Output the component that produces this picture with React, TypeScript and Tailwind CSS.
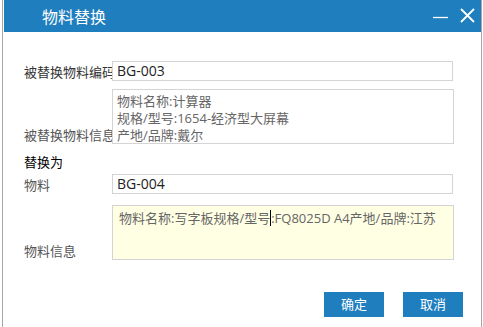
import * as React from "react";

const font = { fontFamily: '"Open Sans", "Noto Sans CJK SC", sans-serif' };

const Row = ({ label, labelClass, children }: { label: string; labelClass?: string; children: React.ReactNode }) => (
  <div className="flex items-end">
    <div className={`w-[88px] overflow-hidden whitespace-nowrap text-[13px] leading-[17px] ${labelClass ?? "text-[#333]"}`}>
      {label}
    </div>
    {children}
  </div>
);

const Input = ({ value }: { value: string }) => (
  <div className="flex h-[20px] w-[341px] items-center border border-[#d4d4d4] bg-white pl-[4px] text-[14px] leading-[18px] text-[#222]">
    {value}
  </div>
);

export default function App() {
  return (
    <div className="h-[327px] w-[483px] bg-white pl-[2px]" style={font}>
      <div className="h-full w-[480px] border-x border-[#a8a8a8] pl-px">
        {/* title bar */}
        <div className="flex h-[32px] items-center bg-[#1f7ebd] pl-[38px] pr-[6px]">
          <span className="pt-[2px] text-[16px] text-white">物料替换</span>
          <div className="ml-auto flex items-center gap-[12px]">
            <svg width="15" height="16" viewBox="0 0 15 16">
              <line x1="0" y1="9.5" x2="15" y2="9.5" stroke="white" strokeWidth="1.3" />
            </svg>
            <svg width="15" height="16" viewBox="0 0 15 16">
              <path d="M1 1 L14 14 M14 1 L1 14" stroke="white" strokeWidth="1.8" fill="none" />
            </svg>
          </div>
        </div>

        <div className="pl-[20px] pr-[18px]">
          <div className="mt-[29px]">
            <Row label="被替换物料编码">
              <Input value="BG-003" />
            </Row>
          </div>

          <div className="mt-[8px]">
            <Row label="被替换物料信息" labelClass="text-[#555]">
              <div className="h-[55px] w-[342px] border border-[#d4d4d4] bg-white px-[4px] pt-[3px] text-[13px] leading-[17px] text-[#666]">
                <div>物料名称:计算器</div>
                <div>规格/型号:1654-经济型大屏幕</div>
                <div>产地/品牌:戴尔</div>
              </div>
            </Row>
          </div>

          <div className="mt-[10px] text-[13px] leading-[17px] text-black">替换为</div>

          <div className="mt-[3px]">
            <Row label="物料" labelClass="text-[#555]">
              <Input value="BG-004" />
            </Row>
          </div>

          <div className="mt-[11px]">
            <Row label="物料信息" labelClass="text-[#555]">
              <div className="h-[55px] w-[342px] border border-[#d4d4d4] bg-[#ffffe4] px-[6px] pt-[4px] text-[13px] leading-[17px] whitespace-nowrap text-[#666]">
                物料名称:写字板规格/型号
                <span className="inline-block h-[16px] w-0 border-l border-black align-[-3px]" />
                :FQ8025D A4产地/品牌:江苏
              </div>
            </Row>
          </div>

          <div className="mt-[32px] flex justify-end gap-[19px]">
            <button className="h-[25px] w-[60px] bg-[#1f7ebd] text-[13px] text-white">确定</button>
            <button className="h-[25px] w-[60px] bg-[#1f7ebd] text-[13px] text-white">取消</button>
          </div>
        </div>
      </div>
    </div>
  );
}
